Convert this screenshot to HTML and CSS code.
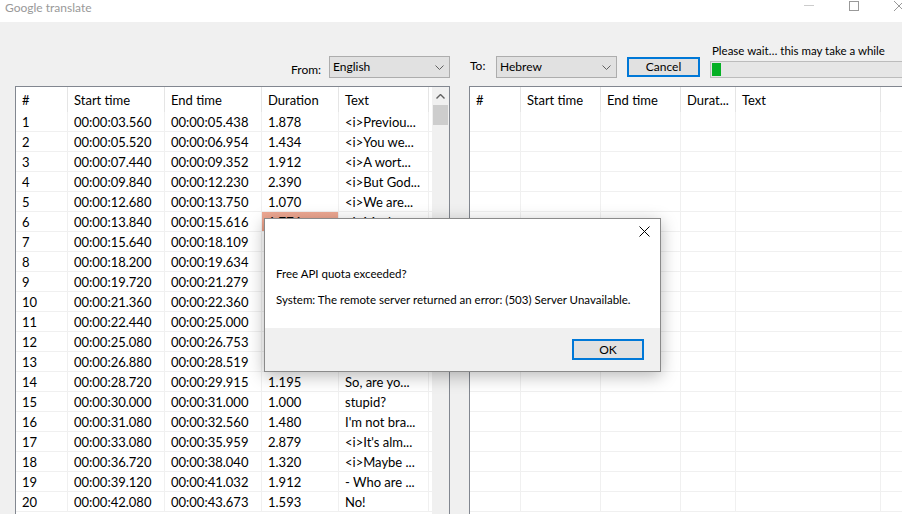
FILE: index.html
```html
<!DOCTYPE html>
<html lang="en">
<head>
  <meta charset="UTF-8">
  <title>Google translate</title>
  <link rel="stylesheet" href="styles.css">
</head>
<body>

  <div class="titlebar">
    <span class="title">Google translate</span>
    <div class="winbtns">
      <span class="wb"><span class="wb-min"></span></span>
      <span class="wb"><span class="wb-max"></span></span>
      <span class="wb">
        <svg width="10" height="10" viewBox="0 0 10 10"><path d="M0 0L10 10M10 0L0 10" stroke="#999" stroke-width="1"/></svg>
      </span>
    </div>
  </div>

  <!-- Language selection + progress -->
  <div class="toolbar">
    <span class="lbl lbl-from">From:</span>
    <div class="combo">English
      <svg class="chev" width="9" height="5" viewBox="0 0 9 5"><path d="M0.5 0.5L4.5 4.5L8.5 0.5" fill="none" stroke="#606060"/></svg>
    </div>
    <span class="lbl lbl-to">To:</span>
    <div class="combo">Hebrew
      <svg class="chev" width="9" height="5" viewBox="0 0 9 5"><path d="M0.5 0.5L4.5 4.5L8.5 0.5" fill="none" stroke="#606060"/></svg>
    </div>
    <button class="btn btn-cancel">Cancel</button>
    <div class="progress">
      <div class="progress-text">Please wait… this may take a while</div>
      <div class="progress-bar"><div class="progress-fill"></div></div>
    </div>
  </div>

  <div class="panes">

    <!-- Source subtitles -->
    <div class="list list-left">
      <div class="list-body">
        <table class="grid">
          <colgroup>
            <col class="l1"><col class="l2"><col class="l3"><col class="l4"><col class="l5"><col>
          </colgroup>
          <thead>
            <tr><th>#</th><th>Start time</th><th>End time</th><th>Duration</th><th>Text</th><th></th></tr>
          </thead>
          <tbody>
            <tr><td>1</td><td>00:00:03.560</td><td>00:00:05.438</td><td>1.878</td><td>&lt;i&gt;Previou...</td><td></td></tr>
            <tr><td>2</td><td>00:00:05.520</td><td>00:00:06.954</td><td>1.434</td><td>&lt;i&gt;You we...</td><td></td></tr>
            <tr><td>3</td><td>00:00:07.440</td><td>00:00:09.352</td><td>1.912</td><td>&lt;i&gt;A wort...</td><td></td></tr>
            <tr><td>4</td><td>00:00:09.840</td><td>00:00:12.230</td><td>2.390</td><td>&lt;i&gt;But God...</td><td></td></tr>
            <tr><td>5</td><td>00:00:12.680</td><td>00:00:13.750</td><td>1.070</td><td>&lt;i&gt;We are...</td><td></td></tr>
            <tr><td>6</td><td>00:00:13.840</td><td>00:00:15.616</td><td class="warn">1.776</td><td>&lt;i&gt;Maybe...</td><td></td></tr>
            <tr><td>7</td><td>00:00:15.640</td><td>00:00:18.109</td><td>2.469</td><td>&lt;i&gt;And th...</td><td></td></tr>
            <tr><td>8</td><td>00:00:18.200</td><td>00:00:19.634</td><td>1.434</td><td>&lt;i&gt;Who...</td><td></td></tr>
            <tr><td>9</td><td>00:00:19.720</td><td>00:00:21.279</td><td>1.559</td><td>Hey!</td><td></td></tr>
            <tr><td>10</td><td>00:00:21.360</td><td>00:00:22.360</td><td>1.000</td><td>What?</td><td></td></tr>
            <tr><td>11</td><td>00:00:22.440</td><td>00:00:25.000</td><td>2.560</td><td>- Come on...</td><td></td></tr>
            <tr><td>12</td><td>00:00:25.080</td><td>00:00:26.753</td><td>1.673</td><td>I said...</td><td></td></tr>
            <tr><td>13</td><td>00:00:26.880</td><td>00:00:28.519</td><td>1.639</td><td>Well...</td><td></td></tr>
            <tr><td>14</td><td>00:00:28.720</td><td>00:00:29.915</td><td>1.195</td><td>So, are yo...</td><td></td></tr>
            <tr><td>15</td><td>00:00:30.000</td><td>00:00:31.000</td><td>1.000</td><td>stupid?</td><td></td></tr>
            <tr><td>16</td><td>00:00:31.080</td><td>00:00:32.560</td><td>1.480</td><td>I'm not bra...</td><td></td></tr>
            <tr><td>17</td><td>00:00:33.080</td><td>00:00:35.959</td><td>2.879</td><td>&lt;i&gt;It's alm...</td><td></td></tr>
            <tr><td>18</td><td>00:00:36.720</td><td>00:00:38.040</td><td>1.320</td><td>&lt;i&gt;Maybe ...</td><td></td></tr>
            <tr><td>19</td><td>00:00:39.120</td><td>00:00:41.032</td><td>1.912</td><td>- Who are ...</td><td></td></tr>
            <tr><td>20</td><td>00:00:42.080</td><td>00:00:43.673</td><td>1.593</td><td>No!</td><td></td></tr>
          </tbody>
        </table>
      </div>
      <div class="scrollbar">
        <svg class="sb-up" width="9" height="5" viewBox="0 0 9 5"><path d="M0.5 4.5L4.5 0.5L8.5 4.5" fill="none" stroke="#606060" stroke-width="1.4"/></svg>
        <div class="sb-thumb"></div>
      </div>
    </div>

    <!-- Translated subtitles -->
    <div class="list list-right">
      <table class="grid">
        <colgroup>
          <col class="r1"><col class="r2"><col class="r3"><col class="r4"><col class="r5"><col>
        </colgroup>
        <thead>
          <tr><th>#</th><th>Start time</th><th>End time</th><th>Durat...</th><th>Text</th><th></th></tr>
        </thead>
        <tbody>
          <tr><td></td><td></td><td></td><td></td><td></td><td></td></tr>
          <tr><td></td><td></td><td></td><td></td><td></td><td></td></tr>
          <tr><td></td><td></td><td></td><td></td><td></td><td></td></tr>
          <tr><td></td><td></td><td></td><td></td><td></td><td></td></tr>
          <tr><td></td><td></td><td></td><td></td><td></td><td></td></tr>
          <tr><td></td><td></td><td></td><td></td><td></td><td></td></tr>
          <tr><td></td><td></td><td></td><td></td><td></td><td></td></tr>
          <tr><td></td><td></td><td></td><td></td><td></td><td></td></tr>
          <tr><td></td><td></td><td></td><td></td><td></td><td></td></tr>
          <tr><td></td><td></td><td></td><td></td><td></td><td></td></tr>
          <tr><td></td><td></td><td></td><td></td><td></td><td></td></tr>
          <tr><td></td><td></td><td></td><td></td><td></td><td></td></tr>
          <tr><td></td><td></td><td></td><td></td><td></td><td></td></tr>
          <tr><td></td><td></td><td></td><td></td><td></td><td></td></tr>
          <tr><td></td><td></td><td></td><td></td><td></td><td></td></tr>
          <tr><td></td><td></td><td></td><td></td><td></td><td></td></tr>
          <tr><td></td><td></td><td></td><td></td><td></td><td></td></tr>
          <tr><td></td><td></td><td></td><td></td><td></td><td></td></tr>
          <tr><td></td><td></td><td></td><td></td><td></td><td></td></tr>
          <tr><td></td><td></td><td></td><td></td><td></td><td></td></tr>
        </tbody>
      </table>
    </div>
  </div>

  <!-- Error message box -->
  <div class="msgbox">
    <div class="msg-main">
      <svg class="msg-close" width="11" height="11" viewBox="0 0 11 11"><path d="M0.5 0.5L10.5 10.5M10.5 0.5L0.5 10.5" stroke="#000" stroke-width="1"/></svg>
      <p class="msg-line">Free API quota exceeded?</p>
      <p class="msg-line">System: The remote server returned an error: (503) Server Unavailable.</p>
    </div>
    <div class="msg-foot">
      <button class="btn btn-ok">OK</button>
    </div>
  </div>

</body>
</html>
```

FILE: styles.css
```css
body {
  margin: 0;
  width: 902px;
  height: 514px;
  overflow: hidden;
  position: relative;
  background: #f0f0f0;
  font-family: Lato, "Noto Sans", sans-serif;
  font-size: 12px;
  color: #000;
}

/* title bar */
.titlebar {
  height: 22px;
  background: #fff;
  display: flex;
  justify-content: space-between;
  margin-right: -19px;
}

.title {
  padding-left: 5px;
  line-height: 15px;
  font-size: 12px;
  color: #999;
}

.winbtns {
  display: flex;
}

.wb {
  width: 45px;
  height: 11px;
  display: flex;
  justify-content: center;
  align-items: center;
}

.wb-min {
  width: 10px;
  border-top: 1px solid #ccc;
}

.wb-max {
  width: 8px;
  height: 8px;
  border: 1px solid #999;
}

/* toolbar */
.toolbar {
  height: 64px;
  display: flex;
  align-items: flex-start;
  padding-left: 291px;
}

.lbl {
  line-height: 16px;
}

.lbl-from {
  margin-top: 40px;
  width: 38px;
}

.lbl-to {
  margin-top: 36px;
  margin-left: 20px;
  width: 26px;
}

.combo {
  margin-top: 34px;
  width: 121px;
  height: 22px;
  box-sizing: border-box;
  border: 1px solid #adadad;
  background: #e1e1e1;
  padding-left: 3px;
  line-height: 20px;
  position: relative;
}

.chev {
  position: absolute;
  right: 5px;
  top: 8px;
}

.btn {
  font: inherit;
  color: #000;
  background: #e1e1e1;
  border: 2px solid #0078d7;
  padding: 0;
  box-sizing: border-box;
}

.btn-cancel {
  margin-top: 35px;
  margin-left: 10px;
  width: 73px;
  height: 20px;
  line-height: 16px;
}

.progress {
  margin-left: 10px;
  margin-top: 20px;
  flex: 1;
  margin-right: -20px;
}

.progress-text {
  padding-left: 2px;
  line-height: 18px;
  font-size: 11.5px;
}

.progress-bar {
  margin-top: 1px;
  height: 17px;
  box-sizing: border-box;
  border: 1px solid #bcbcbc;
  background: #e6e6e6;
  padding: 1px;
}

.progress-fill {
  width: 9px;
  height: 100%;
  background: #06b025;
}

/* lists */
.panes {
  display: flex;
  gap: 19px;
  padding-left: 15px;
}

.list {
  flex: none;
  height: 440px;
  border: 1px solid #828790;
  background: #fff;
  overflow: hidden;
  font-size: 13px;
}

.list-left {
  width: 433px;
  display: flex;
}

.list-body {
  width: 416px;
  overflow: hidden;
}

.list-right {
  width: 460px;
}

.grid {
  border-collapse: separate;
  border-spacing: 0;
  table-layout: fixed;
  width: 100%;
}

.grid th, .grid td {
  padding: 0 0 0 6px;
  text-align: left;
  font-weight: normal;
  white-space: nowrap;
  overflow: hidden;
  border-right: 1px solid #f0f0f0;
}

.grid th {
  height: 25px;
  border-right-color: #e5e5e5;
}

.grid td {
  height: 19px;
  padding-top: 1px;
  line-height: 18px;
  box-sizing: border-box;
  height: 20px;
  border-bottom: 1px solid #f0f0f0;
}

.grid th:last-child, .grid td:last-child {
  border-right: none;
}

.grid td.warn {
  background: linear-gradient(#eea994, #e99c84);
}

.l1 { width: 52px; }
.l2 { width: 97px; }
.l3 { width: 97px; }
.l4 { width: 77px; }
.l5 { width: 90px; }

.r1 { width: 51px; }
.r2 { width: 80px; }
.r3 { width: 80px; }
.r4 { width: 55px; }
.r5 { width: 145px; }

.scrollbar {
  width: 17px;
  background: #f0f0f0;
  display: flex;
  flex-direction: column;
  align-items: center;
}

.sb-up {
  margin-top: 7px;
}

.sb-thumb {
  margin-top: 6px;
  width: 15px;
  height: 20px;
  background: #cdcdcd;
}

/* message box */
.msgbox {
  position: absolute;
  left: 264px;
  top: 218px;
  width: 397px;
  height: 154px;
  box-sizing: border-box;
  border: 1px solid #8a8a8a;
  background: #fff;
  box-shadow: 0 4px 16px rgba(0,0,0,0.28);
  display: flex;
  flex-direction: column;
  font-size: 11.5px;
}

.msg-main {
  height: 109px;
  position: relative;
  padding: 47px 0 0 11px;
  box-sizing: border-box;
}

.msg-close {
  position: absolute;
  right: 10px;
  top: 7px;
}

.msg-line {
  margin: 0 0 10px;
  line-height: 16px;
}

.msg-foot {
  flex: 1;
  background: #f0f0f0;
  display: flex;
  justify-content: flex-end;
  align-items: flex-start;
  padding: 11px 16px 0 0;
}

.btn-ok {
  width: 72px;
  height: 21px;
  font-size: 12px;
}
```
